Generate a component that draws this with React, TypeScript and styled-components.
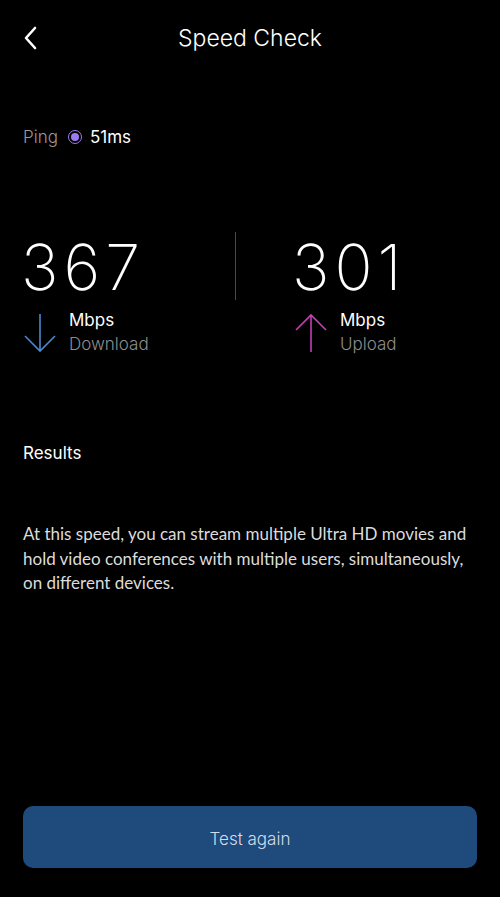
import styled, { createGlobalStyle } from "styled-components";

const GlobalStyle = createGlobalStyle`
  html, body {
    margin: 0;
    padding: 0;
    background: #000;
  }
  body {
    font-family: Inter, "Noto Sans", sans-serif;
    color: #fff;
  }
`

const Screen = styled.div`
  display: flex;
  flex-direction: column;
  height: 897px;
  width: 500px;
  box-sizing: border-box;
  padding: 0 23px 29px;
  background: #000;
`
const Header = styled.header`
  display: grid;
  grid-template-columns: 40px 1fr 40px;
  align-items: center;
  height: 76px;
`
const BackButton = styled.button`
  background: none;
  border: none;
  padding: 0;
  cursor: pointer;
  display: flex;
  align-items: center;
  height: 24px;
`
const Title = styled.h1`
  margin: 0;
  text-align: center;
  font-size: 23px;
  font-weight: 300;
  color: #fff;
`
const PingRow = styled.div`
  display: flex;
  align-items: center;
  gap: 8px;
  margin-top: 51px;
  font-size: 17px;
  font-weight: 300;
`
const PingLabel = styled.span`
  color: #9a9a9a;
  margin-right: 2px;
`
const Radio = styled.span`
  width: 12px;
  height: 12px;
  border-radius: 50%;
  border: 1.5px solid #9a7cf0;
  display: flex;
  align-items: center;
  justify-content: center;
  &::after {
    content: "";
    width: 8px;
    height: 8px;
    border-radius: 50%;
    background: #9a7cf0;
  }
`
const PingValue = styled.span`
  color: #fff;
  font-weight: 400;
`
const Speeds = styled.div`
  display: grid;
  grid-template-columns: 212px 1px 1fr;
  margin-top: 85px;
`
const SpeedBlock = styled.div<{ $inset?: boolean }>`
  display: flex;
  flex-direction: column;
  padding-left: ${p => (p.$inset ? "58px" : "0")};
`
const Divider = styled.div`
  background: #4a4a4a;
  width: 1px;
  height: 68px;
`
const Number = styled.div`
  font-size: 63px;
  font-weight: 200;
  line-height: 62px;
  height: 62px;
  letter-spacing: 5px;
  margin-top: 4px;
  margin-left: -2px;
`
const UnitRow = styled.div`
  display: flex;
  align-items: flex-start;
  gap: 12px;
  margin-top: 15px;
`
const Arrow = styled.svg`
  width: 34px;
  height: 40px;
  flex: none;
`
const Labels = styled.div`
  display: flex;
  flex-direction: column;
  font-size: 17px;
  line-height: 24px;
  margin-top: -5px;
`
const Unit = styled.span`
  color: #fff;
  font-weight: 400;
`
const Caption = styled.span`
  color: #8e8e8e;
  font-weight: 300;
`
const Results = styled.h2`
  margin: 87px 0 0;
  font-size: 17px;
  font-weight: 400;
  color: #fff;
`
const Description = styled.p`
  margin: 59px 0 0;
  font-family: Lato, "Noto Sans", sans-serif;
  font-size: 17px;
  line-height: 24.5px;
  font-weight: 400;
  color: #dcdcdc;
`
const Spacer = styled.div`
  flex: 1;
`
const PrimaryButton = styled.button`
  height: 62px;
  width: 100%;
  border: none;
  border-radius: 10px;
  background: #1f4a7c;
  color: #d4dcea;
  font-family: Inter, "Noto Sans", sans-serif;
  font-size: 17px;
  font-weight: 300;
  padding-top: 5px;
  cursor: pointer;
`

const App = () => {
  return (
    <>
      <GlobalStyle />
      <Screen>
        <Header>
          <BackButton aria-label="Back">
            <svg width="14" height="24" viewBox="0 0 14 24">
              <path d="M12 2 L3 12 L12 22" fill="none" stroke="#fff" strokeWidth="2.6" strokeLinecap="round" strokeLinejoin="round" />
            </svg>
          </BackButton>
          <Title>Speed Check</Title>
          <span />
        </Header>
        <PingRow>
          <PingLabel>Ping</PingLabel>
          <Radio />
          <PingValue>51ms</PingValue>
        </PingRow>
        <Speeds>
          <SpeedBlock>
            <Number>367</Number>
            <UnitRow>
              <Arrow viewBox="0 0 34 40">
                <path d="M17 1 V38 M2 23 L17 38 L32 23" fill="none" stroke="#4a88cc" strokeWidth="1.6" />
              </Arrow>
              <Labels>
                <Unit>Mbps</Unit>
                <Caption>Download</Caption>
              </Labels>
            </UnitRow>
          </SpeedBlock>
          <Divider />
          <SpeedBlock $inset>
            <Number>301</Number>
            <UnitRow>
              <Arrow viewBox="0 0 34 40">
                <path d="M17 39 V2 M2 17 L17 2 L32 17" fill="none" stroke="#c23fb4" strokeWidth="1.6" />
              </Arrow>
              <Labels>
                <Unit>Mbps</Unit>
                <Caption>Upload</Caption>
              </Labels>
            </UnitRow>
          </SpeedBlock>
        </Speeds>
        <Results>Results</Results>
        <Description>
          At this speed, you can stream multiple Ultra HD movies and hold video conferences with multiple users, simultaneously, on different devices.
        </Description>
        <Spacer />
        <PrimaryButton>Test again</PrimaryButton>
      </Screen>
    </>
  )
}
export default App
